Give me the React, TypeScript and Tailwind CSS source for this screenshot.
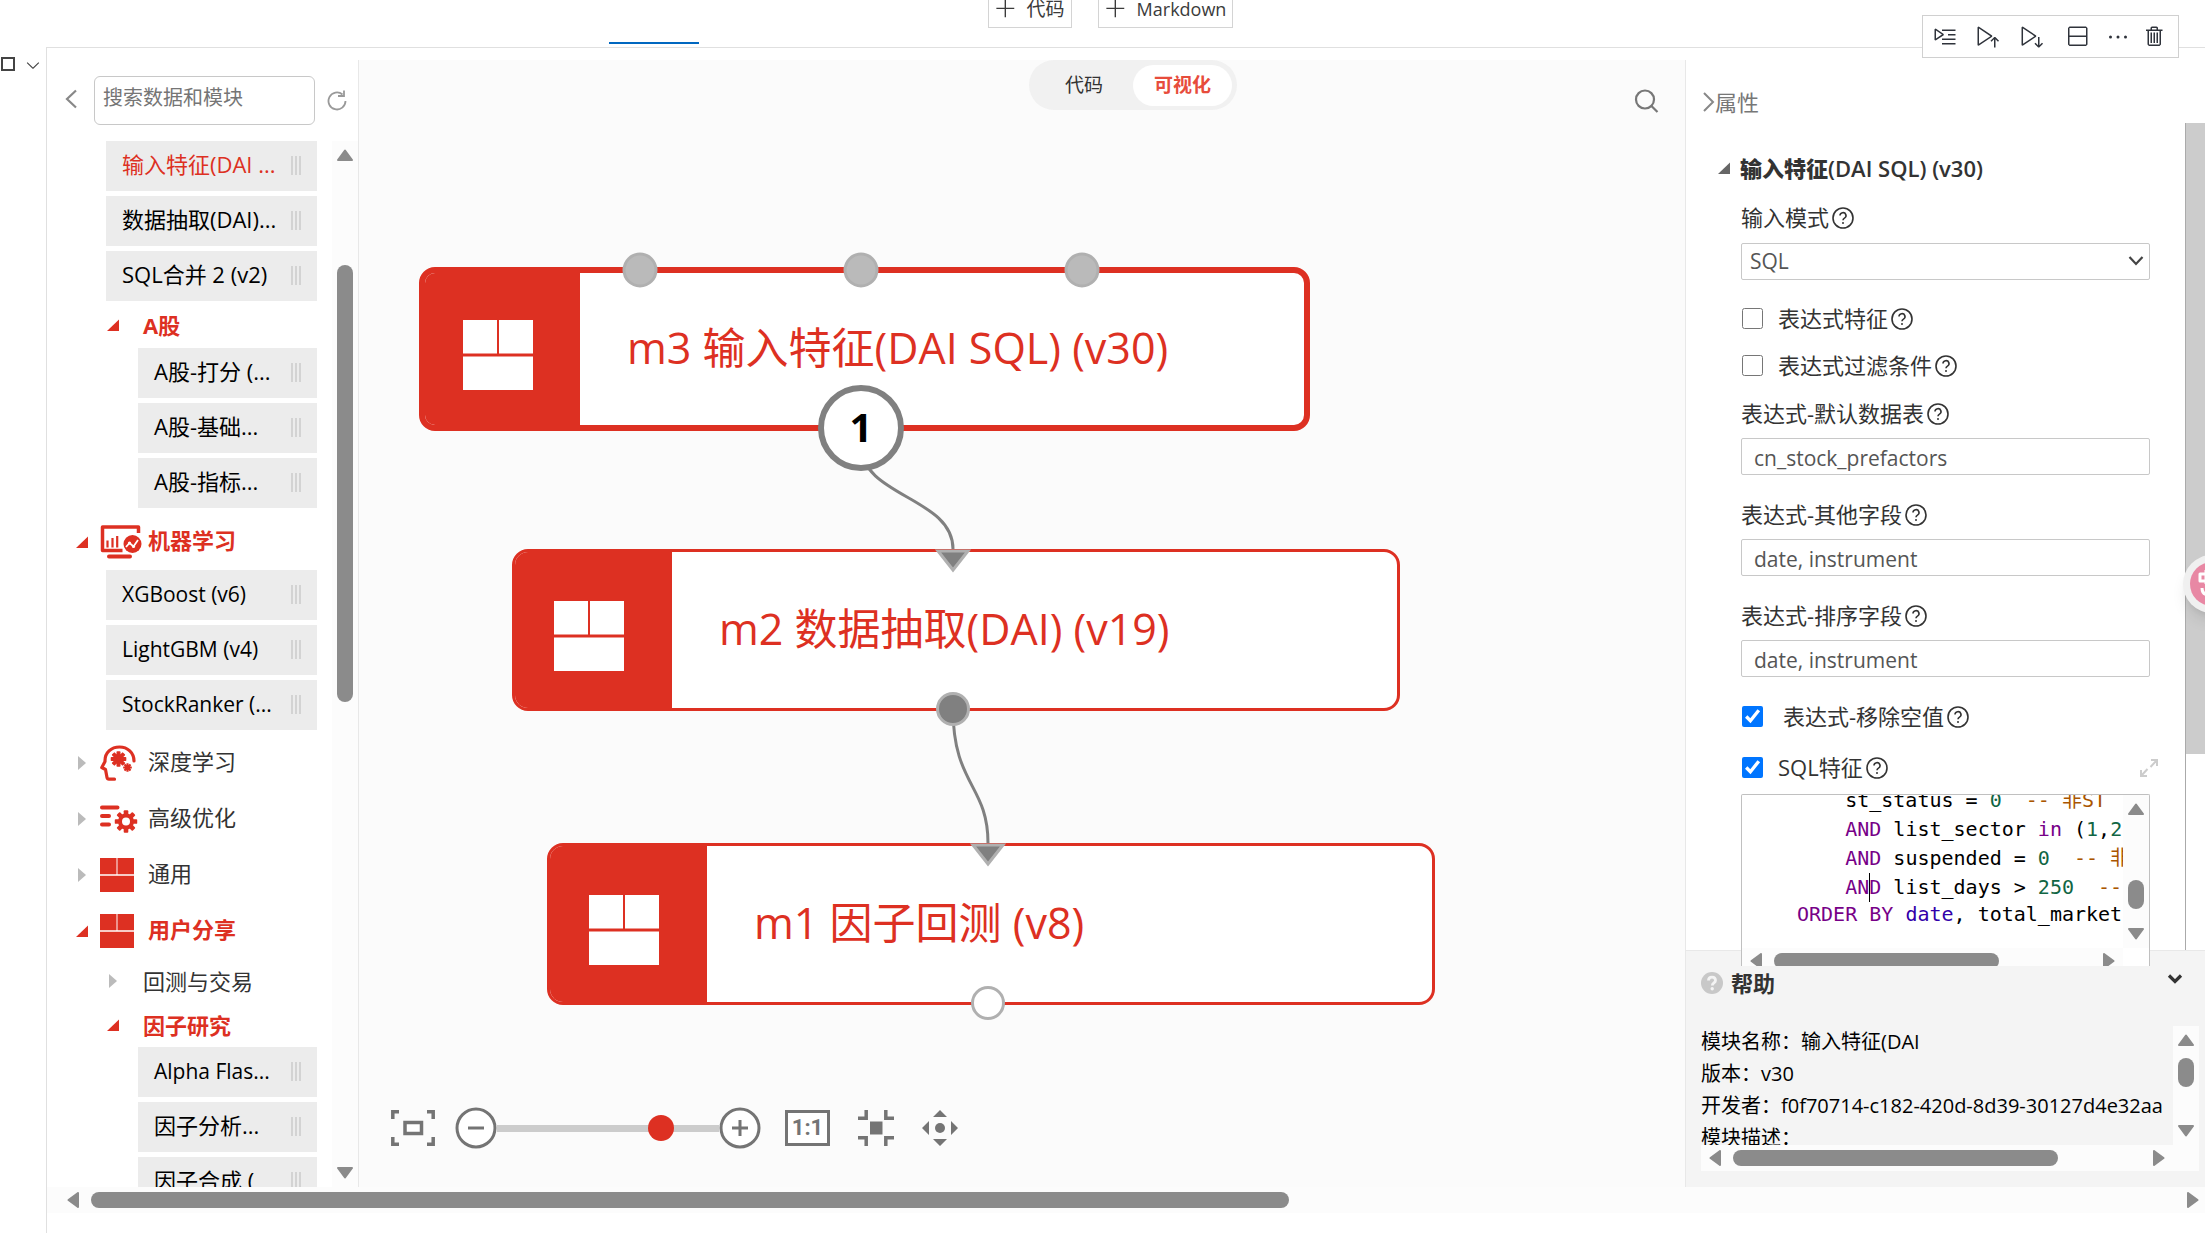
import React from "react";
import {
  VscAdd,
  VscChevronDown,
  VscDebugLineByLine,
  VscEllipsis,
  VscRunAbove,
  VscRunBelow,
  VscSplitVertical,
  VscTrash,
} from "react-icons/vsc";

type Dir = "up" | "down" | "left" | "right";

const arrowPaths: Record<Dir, string> = {
  up: "M8 1.5L15 11H1Z",
  down: "M8 10.5L15 1H1Z",
  left: "M1.5 8L11 1V15Z",
  right: "M10.5 8L1 1V15Z",
};

function ScrollArrow({ dir }: { dir: Dir }) {
  const vertical = dir === "up" || dir === "down";
  return (
    <svg
      className="shrink-0"
      width={vertical ? 16 : 12}
      height={vertical ? 12 : 16}
      fill="#8b8b8b"
      stroke="#8b8b8b"
      strokeWidth="2"
      strokeLinejoin="round"
      aria-hidden="true"
    >
      <path d={arrowPaths[dir]} />
    </svg>
  );
}

/* ---------- icons ---------- */

function BlocksIcon({ className }: { className: string }) {
  return (
    <svg className={className} viewBox="0 0 70 70" fill="currentColor" aria-hidden="true">
      <path d="M0 0h34v33.500H0zM36 0h34v33.500H36zM0 36.500h70V70H0z" />
    </svg>
  );
}

function ChartScreenIcon() {
  return (
    <svg width="42" height="34" viewBox="0 0 42 34" fill="none" stroke="#dd3022" aria-hidden="true">
      <path d="M38.500 8V2H2.500v23.500h20" strokeWidth="3.500" strokeLinejoin="round" />
      <path d="M9 31.500h21" strokeWidth="4" strokeLinecap="round" />
      <path d="M7.500 15.500v7M12.500 13v9.500M17.200 11v11.500" strokeWidth="2.200" />
      <circle cx="32.500" cy="19" r="9" fill="#dd3022" stroke="none" />
      <path d="M26 22l3.500-4 4 3.500 4.500-6.500" stroke="#fff" strokeWidth="1.800" />
      <circle cx="29.500" cy="18" r="1.600" fill="#fff" stroke="none" />
      <circle cx="33.500" cy="21.500" r="1.600" fill="#fff" stroke="none" />
    </svg>
  );
}

const gearTeeth = [0, 45, 90, 135, 180, 225, 270, 315];

function Gear({ cx, cy, r, tooth, hole }: { cx: number; cy: number; r: number; tooth: number; hole: number }) {
  return (
    <g transform={`translate(${cx} ${cy})`} fill="#dd3022" stroke="none">
      <circle r={r} />
      {gearTeeth.map((a) => (
        <rect key={a} x={-tooth / 2} y={-r - tooth * 0.7} width={tooth} height={tooth * 1.4} rx={tooth * 0.2} transform={`rotate(${a})`} />
      ))}
      {hole > 0 && <circle r={hole} fill="#fff" />}
    </g>
  );
}

function HeadIcon() {
  return (
    <svg width="36" height="36" viewBox="0 0 36 36" fill="none" stroke="#dd3022" aria-hidden="true">
      <path
        d="M34 16C34 7.500 27.500 2 19.500 2 11 2 5 8 5 15.500v1L1.800 22.500 5.500 24.500 7 32.500q.3 1.700 2 1.700h5.500"
        strokeWidth="3.200"
        strokeLinecap="round"
        strokeLinejoin="round"
      />
      <Gear cx={18.500} cy={14} r={5} tooth={4} hole={0} />
      <Gear cx={27.500} cy={22.500} r={2.800} tooth={2.200} hole={0} />
    </svg>
  );
}

function TuneIcon() {
  return (
    <svg width="38" height="29" viewBox="0 0 38 29" fill="none" stroke="#dd3022" strokeWidth="4" strokeLinecap="round" aria-hidden="true">
      <path d="M2 2.500h15.500M2 11h7M2 19.500h7" />
      <Gear cx={26} cy={16.500} r={8} tooth={4.600} hole={4} />
    </svg>
  );
}

function HelpMark() {
  return (
    <svg className="ml-[3px] h-[22px] w-[22px] shrink-0" viewBox="0 0 22 22" fill="none" stroke="#333" strokeWidth="1.600" role="img" aria-label="说明">
      <circle cx="11" cy="11" r="10" />
      <path d="M8 8.600a3 2.900 0 1 1 4.500 2.500c-1 .6-1.500 1-1.500 2.200" />
      <circle cx="11" cy="16" r="1" fill="#333" stroke="none" />
    </svg>
  );
}

/* ---------- module tree ---------- */

type Row =
  | { kind: "item"; text: string; nested?: boolean; active?: boolean; latin?: boolean }
  | { kind: "group"; text: string; open: boolean; icon: "chart" | "head" | "tune" | "blocks" }
  | { kind: "sub"; text: string; open: boolean; tight?: boolean };

const rows: Row[] = [
  { kind: "item", text: "输入特征(DAI ...", active: true },
  { kind: "item", text: "数据抽取(DAI)..." },
  { kind: "item", text: "SQL合并 2 (v2)" },
  { kind: "sub", text: "A股", open: true, tight: true },
  { kind: "item", text: "A股-打分 (...", nested: true },
  { kind: "item", text: "A股-基础...", nested: true },
  { kind: "item", text: "A股-指标...", nested: true },
  { kind: "group", text: "机器学习", open: true, icon: "chart" },
  { kind: "item", text: "XGBoost (v6)", latin: true },
  { kind: "item", text: "LightGBM (v4)", latin: true },
  { kind: "item", text: "StockRanker (...", latin: true },
  { kind: "group", text: "深度学习", open: false, icon: "head" },
  { kind: "group", text: "高级优化", open: false, icon: "tune" },
  { kind: "group", text: "通用", open: false, icon: "blocks" },
  { kind: "group", text: "用户分享", open: true, icon: "blocks" },
  { kind: "sub", text: "回测与交易", open: false },
  { kind: "sub", text: "因子研究", open: true },
  { kind: "item", text: "Alpha Flas...", nested: true, latin: true },
  { kind: "item", text: "因子分析...", nested: true },
  { kind: "item", text: "因子合成 (", nested: true },
];

function Caret({ open, color = "#dd3022" }: { open: boolean; color?: string }) {
  return (
    <svg className="shrink-0" width="12" height="14" aria-hidden="true">
      {open ? <path d="M12 1.500V13H0z" fill={color} /> : <path d="M2 0l8 7-8 7z" fill="#bbb" />}
    </svg>
  );
}

function TreeRow({ row }: { row: Row }) {
  if (row.kind === "item") {
    return (
      <li className={row.nested ? "mb-[5px] pl-[91px]" : "mb-[5px] pl-[59px]"}>
        <button
          type="button"
          className={`flex h-[50px] w-full items-center justify-between bg-[#ececec] pr-4 pl-4 text-left whitespace-nowrap ${row.active ? "text-[#dd3022]" : "text-black"} ${row.latin ? "text-[21px]" : "text-[22px]"}`}
        >
          <span className={row.latin ? "" : "pb-[3px]"}>{row.text}</span>
          <span className="mb-0.5 flex gap-0.5">
            <i className="h-[19px] w-0.5 bg-[#d3d3d3]" />
            <i className="h-[19px] w-0.5 bg-[#d3d3d3]" />
            <i className="h-[19px] w-0.5 bg-[#d3d3d3]" />
          </span>
        </button>
      </li>
    );
  }
  const tone = row.open ? "font-bold text-[#dd3022]" : "text-[#333]";
  if (row.kind === "sub") {
    return (
      <li className={row.tight ? "h-[42px]" : "h-11"}>
        <button type="button" className={`flex h-full items-center gap-6 pl-[60px] text-[22px] whitespace-nowrap ${row.tight ? "pb-1" : ""} ${tone}`}>
          <Caret open={row.open} />
          {row.text}
        </button>
      </li>
    );
  }
  return (
    <li className={row.icon === "chart" ? "h-[57px]" : "h-14"}>
      <button type="button" className={`flex h-full items-center pl-[29px] text-[22px] whitespace-nowrap ${tone}`}>
        <Caret open={row.open} />
        <span className="ml-3 flex w-12 items-center text-[#dd3022]">
          {row.icon === "chart" && <ChartScreenIcon />}
          {row.icon === "head" && <HeadIcon />}
          {row.icon === "tune" && <TuneIcon />}
          {row.icon === "blocks" && <BlocksIcon className="h-[34px] w-[34px]" />}
        </span>
        <span className="pb-[3px]">{row.text}</span>
      </button>
    </li>
  );
}

function ModulePanel() {
  return (
    <aside className="flex w-[312px] shrink-0 flex-col border-r border-[#e8e8e8]">
      <div className="flex h-[81px] shrink-0 items-start pt-4 pl-[18px]">
        <button type="button" aria-label="收起" className="flex h-[49px] w-[29px] items-center">
          <svg className="mb-1" width="13" height="20" fill="none" stroke="#888" strokeWidth="2.200" aria-hidden="true">
            <path d="M11 1.500L2 10l9 8.500" />
          </svg>
        </button>
        <input
          aria-label="搜索数据和模块"
          placeholder="搜索数据和模块"
          className="h-[49px] w-[221px] rounded-md border border-[#c8c8c8] bg-white pb-1.5 pl-2 text-xl placeholder:text-[#757575]"
        />
        <button type="button" aria-label="刷新" className="ml-3 flex h-[49px] items-center">
          <svg width="20" height="22" fill="none" stroke="#999" strokeWidth="1.800" aria-hidden="true">
            <path d="M15.500 4.500A8.500 8.500 0 1 0 18.500 11" />
            <path d="M17 .5v5.500h-6" />
          </svg>
        </button>
      </div>
      <div className="flex min-h-0 flex-1">
        <ul className="min-w-0 flex-1 overflow-hidden pr-[15px]">
          {rows.map((row) => (
            <TreeRow key={row.text} row={row} />
          ))}
        </ul>
        <div className="flex w-[26px] flex-col items-center justify-between bg-[#fcfcfc] py-2">
          <ScrollArrow dir="up" />
          <div className="flex w-4 flex-1 flex-col pt-[104px]">
            <div className="h-[437px] rounded-full bg-[#8b8b8b]" />
          </div>
          <ScrollArrow dir="down" />
        </div>
      </div>
    </aside>
  );
}

/* ---------- canvas ---------- */

function FlowNode({ title, place, border, head }: { title: string; place: string; border: string; head: string }) {
  return (
    <div className={`absolute flex overflow-hidden rounded-2xl border-[#dd3022] bg-white ${place} ${border}`}>
      <div className={`flex shrink-0 items-center justify-center bg-[#dd3022] text-white ${head}`}>
        <BlocksIcon className="mt-3 mr-2.5 h-[70px] w-[70px]" />
      </div>
      <div className="flex items-center pb-0.5 pl-[47px] text-[43px] whitespace-nowrap text-[#dd3022]">{title}</div>
    </div>
  );
}

function ZoomBar() {
  return (
    <div className="relative flex h-[42px] items-center text-[#747474]">
      <button type="button" aria-label="全屏">
        <svg width="44" height="36" fill="none" stroke="currentColor" strokeWidth="3.500" aria-hidden="true">
          <path d="M1.800 9V1.800H8M36 1.800h6.200V9M1.800 27v7.200H8M36 34.200h6.200V27" />
          <path d="M14 12.500h16.500v11H14z" fill="#fff" />
        </svg>
      </button>
      <button type="button" aria-label="缩小" className="ml-5">
        <svg width="42" height="42" fill="#fff" stroke="currentColor" strokeWidth="3" aria-hidden="true">
          <circle cx="21" cy="21" r="19" />
          <path d="M13 21h16" />
        </svg>
      </button>
      <label className="relative flex h-[26px] w-[222px] items-center">
        <span className="h-[7px] w-full bg-[#ccc]" />
        <input
          type="range"
          aria-label="缩放"
          min={0}
          max={100}
          defaultValue={77}
          className="absolute inset-0 w-full appearance-none bg-transparent [&::-webkit-slider-thumb]:h-[26px] [&::-webkit-slider-thumb]:w-[26px] [&::-webkit-slider-thumb]:appearance-none [&::-webkit-slider-thumb]:rounded-full [&::-webkit-slider-thumb]:bg-[#dd3022]"
        />
      </label>
      <button type="button" aria-label="放大">
        <svg width="42" height="42" fill="#fff" stroke="currentColor" strokeWidth="3" aria-hidden="true">
          <circle cx="21" cy="21" r="19" />
          <path d="M13 21h16M21 13v16" />
        </svg>
      </button>
      <button type="button" className="ml-6 flex h-9 w-[45px] items-center justify-center border-3 border-current bg-white font-['Roboto'] text-[22px] leading-none font-bold">
        1:1
      </button>
      <button type="button" aria-label="适应" className="ml-7">
        <svg width="36" height="36" fill="none" stroke="currentColor" strokeWidth="3.500" aria-hidden="true">
          <path d="M0 8.200h8.200V0M36 8.200h-8.200V0M0 27.800h8.200V36M36 27.800h-8.200V36" />
          <path d="M12 11.500h12.500v13H12z" fill="currentColor" stroke="none" />
        </svg>
      </button>
      <button type="button" aria-label="移动" className="ml-7">
        <svg width="36" height="36" fill="currentColor" aria-hidden="true">
          <path d="M18 0l7 7H11zM18 36l7-7H11zM0 18l7-7v14zM36 18l-7-7v14z" />
          <circle cx="18" cy="18" r="5" />
        </svg>
      </button>
    </div>
  );
}

function Canvas() {
  return (
    <main className="relative flex min-w-0 flex-1 flex-col justify-between overflow-hidden bg-[#fbfbfb]">
      <div className="relative z-10 grid grid-cols-[1fr_auto_1fr] items-start">
        <div className="col-start-2 ml-[222px] flex h-[50px] items-center rounded-full bg-[#f1f1f1] pr-[5px] text-[19px]">
          <button type="button" className="w-[104px] pl-1.5 text-[#333]">代码</button>
          <button type="button" className="h-[41px] w-[99px] rounded-full bg-white font-bold text-[#e74c3c]">可视化</button>
        </div>
        <button type="button" aria-label="搜索" className="mt-7 mr-6 h-[26px] justify-self-end">
          <svg width="28" height="26" fill="none" stroke="#777" strokeWidth="2.200" aria-hidden="true">
            <circle cx="12" cy="11.500" r="9" />
            <path d="M18.500 18l6 6" />
          </svg>
        </button>
      </div>

      <div className="absolute inset-0">
        <FlowNode title="m3 输入特征(DAI SQL) (v30)" place="top-[207px] left-[60px] h-[164px] w-[891px]" border="border-6" head="w-[155px]" />
        <FlowNode title="m2 数据抽取(DAI) (v19)" place="top-[489px] left-[153px] h-[162px] w-[888px]" border="border-3" head="w-[157px]" />
        <FlowNode title="m1 因子回测 (v8)" place="top-[783px] left-[188px] h-[162px] w-[888px]" border="border-3" head="w-[157px]" />
        <svg className="absolute top-0 left-0" width="1100" height="980" fill="none" aria-hidden="true">
          <path d="M502 385C502 437 594 437 594 489" stroke="#808080" strokeWidth="3" />
          <path d="M594 649C594 725 629 725 629 783" stroke="#808080" strokeWidth="3" />
          <g fill="#bababa" stroke="#b0b0b0" strokeWidth="3">
            <circle cx="281" cy="210" r="16" />
            <circle cx="502" cy="210" r="16" />
            <circle cx="723" cy="210" r="16" />
          </g>
          <g fill="#808080" stroke="#b0b0b0" strokeWidth="3">
            <path d="M579 491h30l-15 19z" />
            <path d="M614 785h30l-15 19z" />
            <circle cx="594" cy="649" r="15.500" />
          </g>
          <circle cx="629" cy="943" r="15.500" fill="#fff" stroke="#b0b0b0" strokeWidth="3" />
        </svg>
        <div className="absolute top-[325px] left-[459px] flex h-[86px] w-[86px] items-center justify-center rounded-full border-6 border-[#808080] bg-white pb-0.5 text-[40px] font-bold text-black">
          1
        </div>
      </div>

      <div className="mb-[38px] pl-8">
        <ZoomBar />
      </div>
    </main>
  );
}

/* ---------- properties ---------- */

function TextField({ id, label, value }: { id: string; label: string; value: string }) {
  return (
    <>
      <label htmlFor={id} className="flex h-[49px] items-center">
        {label}
        <HelpMark />
      </label>
      <input
        id={id}
        defaultValue={value}
        className="mb-[15px] block h-[37px] w-full rounded-xs border border-[#c8c8c8] bg-white pt-0.5 pl-3 text-[21px] text-[#555]"
      />
    </>
  );
}

function CheckField({ label, row, gap, checked }: { label: string; row: string; gap: string; checked?: boolean }) {
  return (
    <label className={`flex items-center ${row}`}>
      <input type="checkbox" defaultChecked={checked} className="ml-px h-[21px] w-[21px] shrink-0 accent-[#0075ff]" />
      <span className={gap}>{label}</span>
      <HelpMark />
    </label>
  );
}

const kw = "text-[#770088]";
const num = "text-[#116644]";
const note = "text-[#aa5500]";

function SqlEditor() {
  return (
    <div className="relative z-10 grid h-[172px] shrink-0 grid-cols-[1fr_26px] grid-rows-[1fr_18px] overflow-hidden rounded-t-xs border border-b-0 border-[#c0c0c0] bg-white">
      <div
        role="textbox"
        aria-label="SQL特征"
        className="-mt-[9px] min-h-0 overflow-hidden pl-[55px] font-['DejaVu_Sans_Mono','Noto_Sans_CJK_SC',monospace] text-xl leading-[29px] whitespace-pre text-black"
      >
        <div>{"    st_status = "}<span className={num}>0</span>{"  "}<span className={note}>-- 非ST</span></div>
        <div>{"    "}<span className={kw}>AND</span>{" list_sector "}<span className={kw}>in</span>{" ("}<span className={num}>1</span>,<span className={num}>2</span></div>
        <div>{"    "}<span className={kw}>AND</span>{" suspended = "}<span className={num}>0</span>{"  "}<span className={note}>-- 非</span></div>
        <div className="relative">{"    "}<span className={kw}>AND</span>{" list_days > "}<span className={num}>250</span>{"  "}<span className={note}>--</span><i className="absolute top-0 left-[72px] h-[29px] w-px bg-black" /></div>
        <div className="leading-6"><span className={kw}>ORDER BY</span>{" "}<span className="text-[#3300aa]">date</span>, total_market</div>
      </div>
      <div className="flex flex-col items-center bg-[#fcfcfc] py-2">
        <ScrollArrow dir="up" />
        <div className="flex w-4 flex-1 flex-col justify-end pb-[19px]">
          <div className="h-[29px] rounded-full bg-[#8b8b8b]" />
        </div>
        <ScrollArrow dir="down" />
      </div>
      <div className="flex items-start justify-between overflow-hidden bg-[#fcfcfc] px-2 pt-[5px]">
        <ScrollArrow dir="left" />
        <div className="mr-auto ml-3 h-4 w-[225px] rounded-full bg-[#8b8b8b]" />
        <ScrollArrow dir="right" />
      </div>
      <div className="bg-white" />
    </div>
  );
}

function HelpPanel() {
  return (
    <section className="flex h-[237px] shrink-0 flex-col border-t border-[#e8e8e8] bg-[#f4f4f4] pl-[15px]">
      <div className="flex h-16 shrink-0 items-center pr-[21px] text-[#333]">
        <svg width="22" height="22" aria-hidden="true">
          <circle cx="11" cy="11" r="11" fill="#c8c8c8" />
          <path d="M7.500 8.500c0-4.500 7-4.500 7 0 0 2.600-3.200 2.300-3.200 5" fill="none" stroke="#f4f4f4" strokeWidth="2.800" />
          <circle cx="11.200" cy="16.800" r="1.700" fill="#f4f4f4" />
        </svg>
        <h2 className="ml-2 text-[22px] font-bold">帮助</h2>
        <button type="button" aria-label="折叠帮助" className="mb-2 ml-auto">
          <svg width="18" height="12" fill="none" stroke="#333" strokeWidth="3.200" aria-hidden="true">
            <path d="M3 2.500l6 6 6-6" />
          </svg>
        </button>
      </div>
      <div className="mt-[11px] mr-1.5 grid h-[145px] grid-cols-[1fr_26px] grid-rows-[119px_26px]">
        <div className="overflow-hidden text-xl leading-8 whitespace-nowrap text-black">
          <p>模块名称：输入特征(DAI</p>
          <p>版本：v30</p>
          <p>开发者：f0f70714-c182-420d-8d39-30127d4e32aa</p>
          <p>模块描述：</p>
        </div>
        <div className="flex flex-col items-center justify-between bg-[#fcfcfc] py-2">
          <ScrollArrow dir="up" />
          <div className="mt-3 mb-auto h-[29px] w-4 rounded-full bg-[#8b8b8b]" />
          <ScrollArrow dir="down" />
        </div>
        <div className="flex items-center justify-between bg-[#fcfcfc] px-2">
          <ScrollArrow dir="left" />
          <div className="mr-auto ml-3 h-4 w-[325px] rounded-full bg-[#8b8b8b]" />
          <ScrollArrow dir="right" />
        </div>
        <div className="bg-[#fcfcfc]" />
      </div>
    </section>
  );
}

function PropertyPanel() {
  return (
    <aside className="flex w-[520px] shrink-0 flex-col border-l border-[#e8e8e8]">
      <div className="flex min-h-0 flex-1 justify-between">
        <div className="w-[464px] pl-4 text-[22px] text-[#333]">
          <button type="button" className="flex h-[84px] items-center text-[#777]">
            <svg width="13" height="20" fill="none" stroke="#888" strokeWidth="2" aria-hidden="true">
              <path d="M2 1l9 9-9 9" />
            </svg>
            属性
          </button>
          <button type="button" className="flex h-12 items-center gap-2.5 pl-4 font-semibold whitespace-nowrap">
            <Caret open color="#666" />
            <span><b>输入特征</b>(DAI SQL) (v30)</span>
          </button>
          <div className="pl-[39px]">
            <label htmlFor="mode" className="flex h-[51px] items-center">
              输入模式
              <HelpMark />
            </label>
            <div className="relative mb-[15px]">
              <select id="mode" className="block h-[37px] w-full appearance-none rounded-xs border border-[#c8c8c8] bg-white pl-2 text-[21px] text-[#555]">
                <option>SQL</option>
              </select>
              <svg className="pointer-events-none absolute top-3 right-1.5" width="16" height="12" fill="none" stroke="#444" strokeWidth="2.200" aria-hidden="true">
                <path d="M1.500 2l6.500 7 6.500-7" />
              </svg>
            </div>
            <CheckField label="表达式特征" row="h-[47px]" gap="ml-[15px]" />
            <CheckField label="表达式过滤条件" row="h-[47px]" gap="ml-[15px]" />
            <TextField id="table" label="表达式-默认数据表" value="cn_stock_prefactors" />
            <TextField id="fields" label="表达式-其他字段" value="date, instrument" />
            <TextField id="order" label="表达式-排序字段" value="date, instrument" />
            <CheckField label="表达式-移除空值" row="h-[49px]" gap="ml-5" checked />
            <div className="-mr-2 flex items-center justify-between">
              <CheckField label="SQL特征" row="h-[53px]" gap="ml-[15px]" checked />
              <button type="button" aria-label="放大编辑器">
                <svg width="18" height="20" fill="none" stroke="#ccc" strokeWidth="2" aria-hidden="true">
                  <path d="M11 2h6v6M17 2l-6.500 7M7 18H1v-6M1 18l6.500-7" />
                </svg>
              </button>
            </div>
            <SqlEditor />
          </div>
        </div>
        <div className="mt-[63px] w-5 shrink-0 border-l border-[#aaa]">
          <div className="h-[631px] bg-[#ccc]" />
        </div>
      </div>
      <HelpPanel />
    </aside>
  );
}

/* ---------- page ---------- */

export default function App() {
  const tool = "flex h-full items-center justify-center text-[24px]";
  return (
    <div className="relative flex h-screen flex-col overflow-hidden bg-white font-['Open_Sans','Noto_Sans_CJK_SC',sans-serif]">
      <header className="relative flex h-[47px] shrink-0 items-start justify-center gap-[26px] pl-4">
        <button type="button" className="flex h-7 items-center gap-2.5 border border-t-0 border-[#d4d4d4] pr-1.5 pb-2.5 pl-1.5 text-[19px] leading-5 text-[#3b3b3b]">
          <VscAdd className="text-[22px]" />
          代码
        </button>
        <button type="button" className="flex h-7 items-center gap-2.5 border border-t-0 border-[#d4d4d4] pr-1.5 pb-2.5 pl-1.5 text-lg leading-5 text-[#3b3b3b]">
          <VscAdd className="text-[22px]" />
          Markdown
        </button>
        <div className="absolute bottom-[3px] left-[609px] h-0.5 w-[90px] bg-[#0067c0]" />
      </header>

      <div className="flex min-h-0 flex-1">
        <div className="flex w-[46px] shrink-0 items-start gap-2 pt-2 text-[#444]">
          <input type="checkbox" aria-label="选择单元格" className="mt-0.5 ml-px h-3.5 w-3.5 appearance-none border-2 border-[#444]" />
          <VscChevronDown className="h-5 w-5" />
        </div>
        <div className="flex min-w-0 flex-1 flex-col border-t border-l border-[#e0e0e0]">
          <div className="mt-3 flex min-h-0 flex-1">
            <ModulePanel />
            <Canvas />
            <PropertyPanel />
          </div>
          <div className="mb-5 flex h-[26px] shrink-0 items-center bg-[#fcfcfc] pr-1.5 pl-5">
            <ScrollArrow dir="left" />
            <div className="mx-3 mr-auto h-4 w-[1198px] rounded-full bg-[#8b8b8b]" />
            <ScrollArrow dir="right" />
          </div>
        </div>
      </div>

      <div className="absolute top-[15px] right-[26px] z-20 flex h-[43px] border border-[#d0d0d0] bg-white pr-1 text-[#2f333b]">
        <button type="button" aria-label="逐行运行" className={`w-[43px] ${tool}`}><VscDebugLineByLine /></button>
        <button type="button" aria-label="执行上方单元格" className={`w-11 ${tool}`}><VscRunAbove /></button>
        <button type="button" aria-label="执行单元格及以下" className={`w-11 ${tool}`}><VscRunBelow /></button>
        <button type="button" aria-label="拆分单元格" className={`w-[45px] ${tool}`}><VscSplitVertical /></button>
        <button type="button" aria-label="更多" className={`w-[37px] ${tool}`}><VscEllipsis /></button>
        <button type="button" aria-label="删除" className={`w-[38px] ${tool}`}><VscTrash /></button>
      </div>

      <button
        type="button"
        aria-label="助手"
        className="absolute top-[555px] -right-9 z-20 flex h-[58px] w-[58px] items-center justify-center rounded-full bg-[#f0f0f0] shadow-lg"
      >
        <svg width="44" height="44" fill="none" stroke="#fff" strokeWidth="3" strokeLinejoin="round" aria-hidden="true">
          <circle cx="22" cy="22" r="22" fill="#e888a4" stroke="none" />
          <path d="M10 12h16v7H10zM16 8v14M12 26q0 7 7 7" />
        </svg>
      </button>
    </div>
  );
}
